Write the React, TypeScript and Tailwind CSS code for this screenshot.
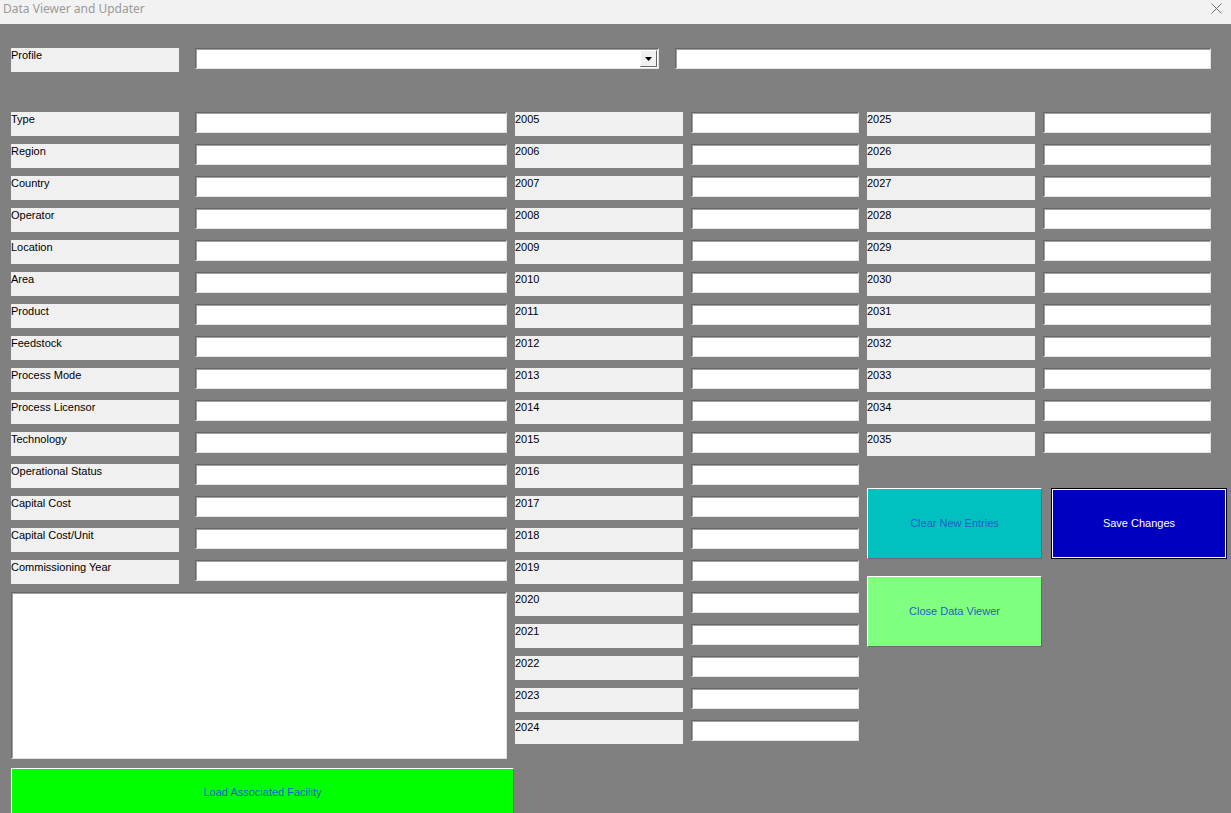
import React from 'react'

const leftFields = [
  'Type',
  'Region',
  'Country',
  'Operator',
  'Location',
  'Area',
  'Product',
  'Feedstock',
  'Process Mode',
  'Process Licensor',
  'Technology',
  'Operational Status',
  'Capital Cost',
  'Capital Cost/Unit',
  'Commissioning Year',
]

const midYears = Array.from({ length: 20 }, (_, i) => String(2005 + i))
const rightYears = Array.from({ length: 11 }, (_, i) => String(2025 + i))

const sunken =
  'bg-white border border-t-[#696969] border-l-[#696969] border-b-[#e3e3e3] border-r-[#e3e3e3] shadow-[inset_1px_1px_0_#a0a0a0]'

function Label({ text, w = 'w-[168px]' }: { text: string; w?: string }) {
  return (
    <div className={`${w} h-[24px] shrink-0 bg-[#f0f0f0] text-[11px] leading-[14px] text-black`}>
      {text}
    </div>
  )
}

function Field({ w }: { w: string }) {
  return <div className={`${w} h-[21px] shrink-0 ${sunken}`} />
}

function Row({ label, fieldW, gap }: { label: string; fieldW: string; gap: string }) {
  return (
    <div className={`flex ${gap} h-[24px]`}>
      <Label text={label} />
      <Field w={fieldW} />
    </div>
  )
}

function RaisedButton({ label, className }: { label: string; className: string }) {
  return (
    <button
      className={`flex items-center justify-center text-[11px] border border-t-white border-l-white border-b-[#696969] border-r-[#696969] ${className}`}
    >
      {label}
    </button>
  )
}

export default function App() {
  return (
    <div
      className="w-[1231px] h-[813px] overflow-hidden bg-[#808080] flex flex-col"
      style={{ fontFamily: '"Liberation Sans", Arial, sans-serif' }}
    >
      {/* title bar */}
      <div className="h-[24px] shrink-0 bg-[#f2f2f2] flex items-start justify-between pl-[3px] pr-[9px] pt-[1px]">
        <span
          className="text-[12px] leading-[16px] text-[#9a9a9a]"
          style={{ fontFamily: '"Noto Sans", "Open Sans", sans-serif' }}
        >
          Data Viewer and Updater
        </span>
        <svg width="11" height="11" viewBox="0 0 11 11" className="mt-[2px]">
          <path d="M0.5 0.5 L10.5 10.5 M10.5 0.5 L0.5 10.5" stroke="#707070" strokeWidth="1" />
        </svg>
      </div>

      <div className="pl-[11px] pt-[24px]">
        {/* profile row */}
        <div className="flex h-[24px]">
          <Label text="Profile" />
          <div className={`ml-[16px] w-[464px] h-[21px] relative ${sunken}`}>
            <div className="absolute right-[1px] top-[1px] w-[17px] h-[17px] bg-[#f0f0f0] border border-t-white border-l-white border-b-[#696969] border-r-[#696969] flex items-center justify-center">
              <svg width="7" height="4" viewBox="0 0 7 4">
                <path d="M0 0 H7 L3.5 4 Z" fill="#000" />
              </svg>
            </div>
          </div>
          <Field w="ml-[16px] w-[536px]" />
        </div>

        <div className="flex mt-[40px]">
          {/* left column */}
          <div className="flex flex-col w-[504px]">
            <div className="flex flex-col gap-[8px]">
              {leftFields.map((f) => (
                <Row key={f} label={f} fieldW="w-[312px]" gap="gap-[16px]" />
              ))}
            </div>
            <div className={`mt-[8px] w-[496px] h-[167px] ${sunken}`} />
            <RaisedButton
              label="Load Associated Facility"
              className="mt-[9px] w-[503px] h-[48px] shrink-0 bg-[#00ff00] text-[#1f5fc8]"
            />
          </div>

          {/* years 2005-2024 */}
          <div className="flex flex-col gap-[8px] w-[352px]">
            {midYears.map((y) => (
              <Row key={y} label={y} fieldW="w-[168px]" gap="gap-[8px]" />
            ))}
          </div>

          {/* years 2025-2035 and actions */}
          <div className="flex flex-col">
            <div className="flex flex-col gap-[8px]">
              {rightYears.map((y) => (
                <Row key={y} label={y} fieldW="w-[168px]" gap="gap-[8px]" />
              ))}
            </div>
            <div className="flex gap-[9px] mt-[32px]">
              <RaisedButton label="Clear New Entries" className="w-[175px] h-[71px] bg-[#00c0c0] text-[#1f5fc8]" />
              <div className="w-[176px] h-[71px] border border-black">
                <button className="w-full h-full flex items-center justify-center text-[11px] text-white bg-[#0000c0] border border-white">
                  Save Changes
                </button>
              </div>
            </div>
            <RaisedButton
              label="Close Data Viewer"
              className="mt-[17px] w-[175px] h-[71px] bg-[#80ff80] text-[#1f5fc8]"
            />
          </div>
        </div>
      </div>
    </div>
  )
}
